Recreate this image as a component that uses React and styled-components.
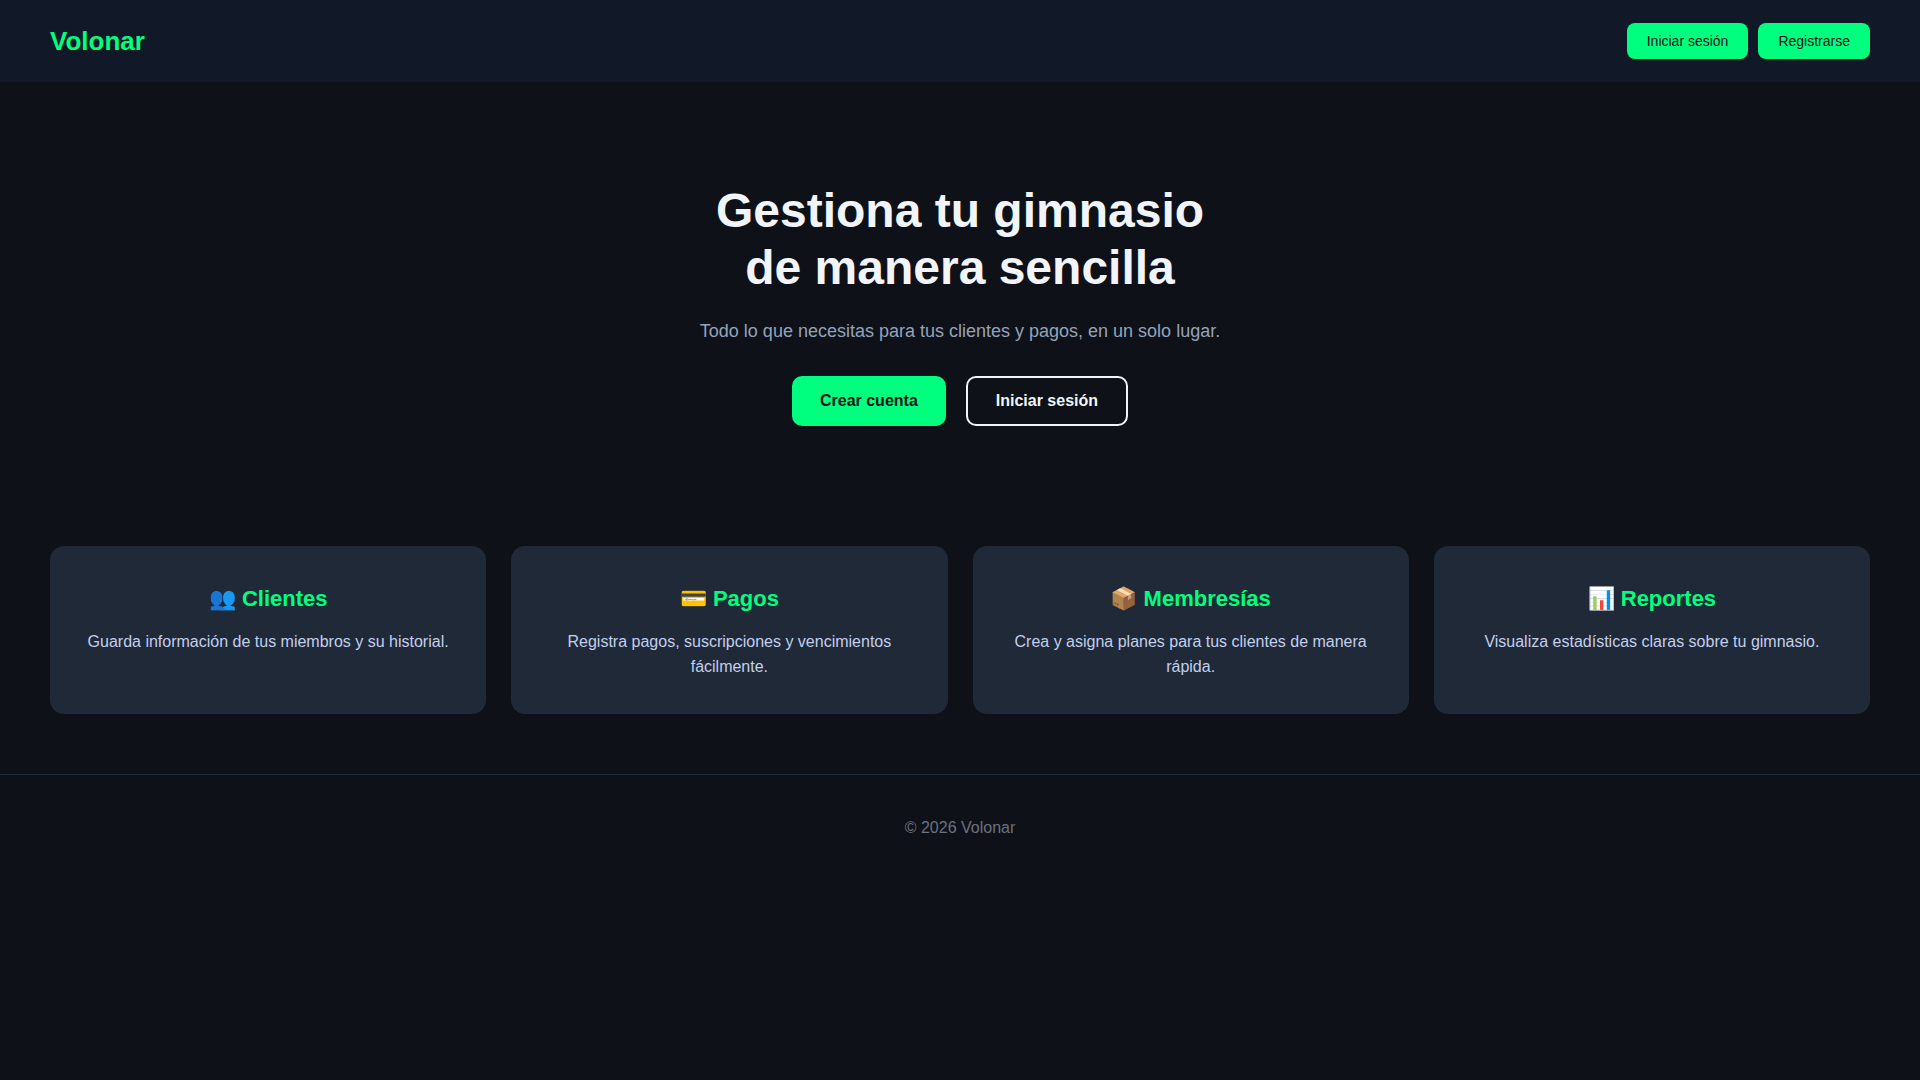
import React from "react";
import styled, { createGlobalStyle } from "styled-components";

const Global = createGlobalStyle`
  * { box-sizing: border-box; margin: 0; padding: 0; }
  body { background: #0e1118; color: #f1f5f9; font-family: "Liberation Sans", Arial, sans-serif; font-size: 16px; }
`;

const Header = styled.header`
  display: flex;
  justify-content: space-between;
  align-items: center;
  padding: 20px 50px;
  background: #111827;
`;

const Logo = styled.a`
  color: #00ff7f;
  font-size: 26px;
  font-weight: 700;
  line-height: 42px;
  text-decoration: none;
`;

const Nav = styled.nav`
  display: flex;
  gap: 10px;
`;

const NavButton = styled.button`
  padding: 10px 20px;
  border: 0;
  border-radius: 8px;
  background: #00ff7f;
  color: #0d1117;
  font-family: inherit;
  font-size: 14px;
  line-height: 16px;
  cursor: pointer;
`;

const Hero = styled.section`
  display: flex;
  flex-direction: column;
  align-items: center;
  padding: 100px 20px 120px;
  text-align: center;
`;

const Title = styled.h1`
  font-size: 48px;
  line-height: 57px;
`;

const Subtitle = styled.p`
  margin: 20px 0 30px;
  color: #94a3b8;
  font-size: 18px;
  line-height: 30px;
`;

const Actions = styled.div`
  display: flex;
  gap: 20px;
`;

const ActionButton = styled.button`
  padding: 14px 28px;
  border: ${(p) => (p.$outlined ? "2px solid #f1f5f9" : "0")};
  border-radius: 10px;
  background: ${(p) => (p.$outlined ? "transparent" : "#00ff7f")};
  color: ${(p) => (p.$outlined ? "#f1f5f9" : "#0d1117")};
  font-family: inherit;
  font-size: 16px;
  font-weight: 700;
  cursor: pointer;
`;

const Features = styled.section`
  display: grid;
  grid-template-columns: repeat(auto-fit, minmax(260px, 1fr));
  gap: 25px;
  padding: 0 50px 60px;
`;

const Card = styled.article`
  padding: 35px 30px;
  border-radius: 14px;
  background: #1f2937;
  text-align: center;
`;

const CardTitle = styled.h2`
  margin-bottom: 12px;
  color: #00ff7f;
  font-size: 22px;
  line-height: 36px;
`;

const CardText = styled.p`
  color: #c3cfee;
  line-height: 25px;
`;

const Footer = styled.footer`
  padding: 40px;
  border-top: 1px solid #1f2937;
  color: #6b7280;
  line-height: 26px;
  text-align: center;
`;

const features = [
  ["👥 Clientes", "Guarda información de tus miembros y su historial."],
  ["💳 Pagos", "Registra pagos, suscripciones y vencimientos fácilmente."],
  ["📦 Membresías", "Crea y asigna planes para tus clientes de manera rápida."],
  ["📊 Reportes", "Visualiza estadísticas claras sobre tu gimnasio."],
];

export default function App() {
  return (
    <>
      <Global />
      <Header>
        <Logo href="#">Volonar</Logo>
        <Nav>
          <NavButton>Iniciar sesión</NavButton>
          <NavButton>Registrarse</NavButton>
        </Nav>
      </Header>
      <main>
        <Hero>
          <Title>
            Gestiona tu gimnasio
            <br />
            de manera sencilla
          </Title>
          <Subtitle>Todo lo que necesitas para tus clientes y pagos, en un solo lugar.</Subtitle>
          <Actions>
            <ActionButton>Crear cuenta</ActionButton>
            <ActionButton $outlined>Iniciar sesión</ActionButton>
          </Actions>
        </Hero>
        <Features>
          {features.map(([title, text]) => (
            <Card key={title}>
              <CardTitle>{title}</CardTitle>
              <CardText>{text}</CardText>
            </Card>
          ))}
        </Features>
      </main>
      <Footer>© 2026 Volonar</Footer>
    </>
  );
}
